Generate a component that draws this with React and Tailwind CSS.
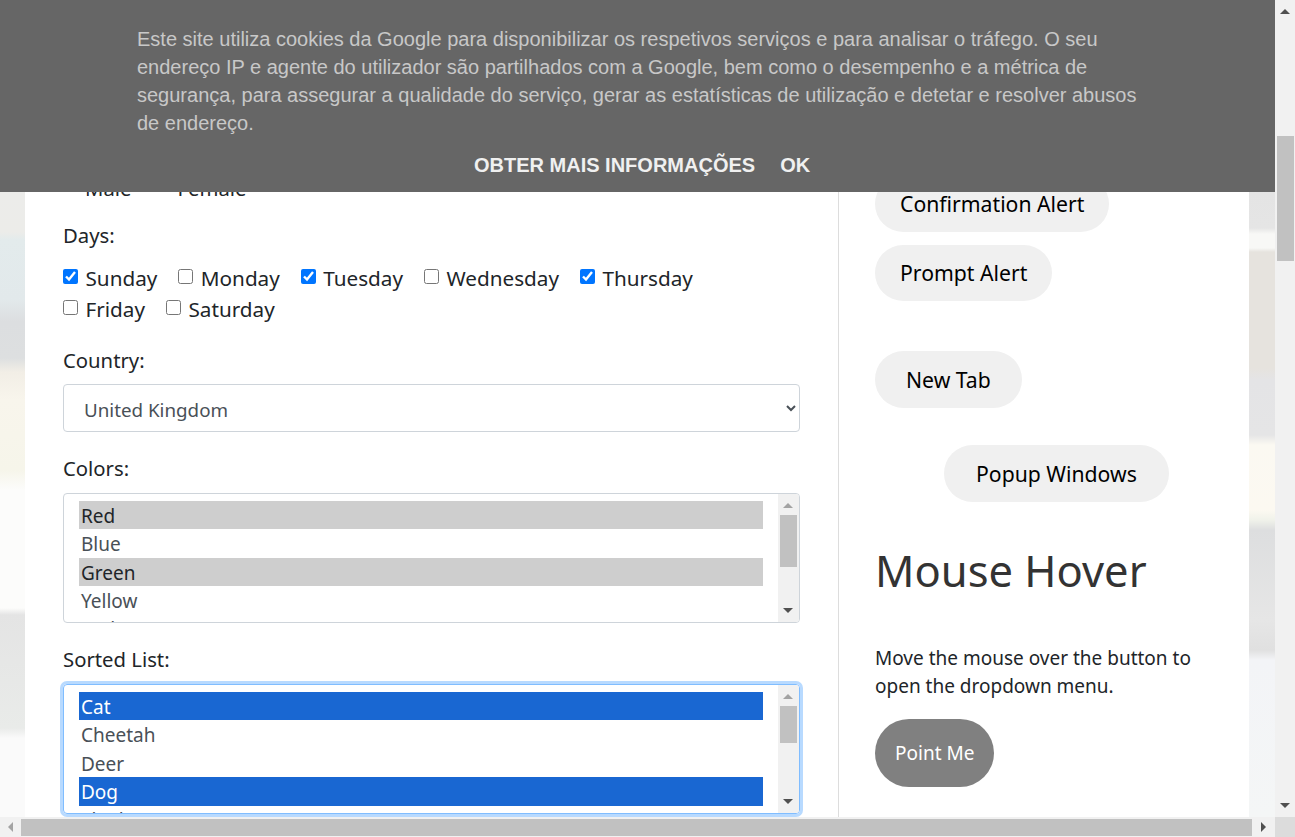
import React from "react";

const colors = ["Red", "Blue", "Green", "Yellow", "Red"];
const colorsOn = ["Red-0", "Green-2"];
const animals = ["Cat", "Cheetah", "Deer", "Dog", "Elephant"];
const animalsOn = ["Cat-0", "Dog-3"];

const days = [
  { name: "Sunday", checked: true },
  { name: "Monday", checked: false },
  { name: "Tuesday", checked: true },
  { name: "Wednesday", checked: false },
  { name: "Thursday", checked: true },
  { name: "Friday", checked: false },
  { name: "Saturday", checked: false },
];

const Arrow = ({ dir, color, className = "" }) => {
  const points = {
    up: "0,5 5,0 10,5",
    down: "0,0 10,0 5,5",
    left: "5,0 5,10 0,5",
    right: "0,0 5,5 0,10",
  };
  const wide = dir === "up" || dir === "down";
  return (
    <svg
      width={wide ? 10 : 5}
      height={wide ? 5 : 10}
      viewBox={wide ? "0 0 10 5" : "0 0 5 10"}
      className={className}
    >
      <polygon points={points[dir]} fill={color} />
    </svg>
  );
};

const ListBox = ({ items, on, selectedClass, focused }) => (
  <div
    className={`flex h-[130px] overflow-hidden rounded border ${
      focused
        ? "border-[#80bdff] shadow-[0_0_0_3px_#b8daff]"
        : "border-[#ced4da]"
    }`}
  >
    <div className="flex-1 overflow-hidden pl-[15px] pr-[15px] pt-[7px]">
      {items.map((item, idx) => (
        <div
          key={idx}
          className={`h-[28.4px] px-[2px] text-[19px] leading-[30px] last:-mt-[0.6px] ${
            on.includes(`${item}-${idx}`) ? selectedClass : "text-[#495057]"
          }`}
        >
          {item}
        </div>
      ))}
    </div>
    {/* List scrollbar */}
    <div className="flex w-[21px] flex-col items-center bg-[#f1f1f1] pr-[1px] pt-[9px]">
      <Arrow dir="up" color="#a3a3a3" />
      <div className={`mt-[7px] w-[17px] bg-[#c1c1c1] ${focused ? "h-[37px]" : "h-[52px]"}`} />
      <div className="flex-1" />
      <Arrow dir="down" color="#505050" className="mb-[9px]" />
    </div>
  </div>
);

const Pill = ({ label, className = "" }) => (
  <button className={`block rounded-full bg-[#f0f0f0] text-[21.2px] leading-[24px] text-black ${className}`}>
    {label}
  </button>
);

export default function App() {
  return (
    <div className="relative flex h-[837px] w-[1295px] flex-col overflow-hidden font-['Noto_Sans','Open_Sans',sans-serif] text-[#212529]">
      <div className="flex h-[817px]">
        {/* Page */}
        <div className="flex w-[1275px] overflow-hidden">
          <div className="w-[25px] bg-[linear-gradient(#ececea_192px,#ecece9_232px,#e3ebec_240px,#e2e9eb_300px,#dcdee0_322px,#dddfe0_358px,#f2eee6_372px,#f8f5ec_400px,#f6f5ea_470px,#fcfcfb_490px,#fcfcfb_608px,#e4e4e4_615px,#e9ebe9_728px,#fafafa_738px)]" />
          <div className="flex w-[1224px] bg-white">
            {/* Left column */}
            <div className="w-[814px] border-r border-[#dddddd] px-[38px] pt-[173px] text-[20.3px]">
              <div className="flex h-[30px] items-center leading-[28px]">
                <input type="radio" className="mb-[8px] h-[15px] w-[15px]" />
                <span className="ml-[7px]">Male</span>
                <input type="radio" className="mb-[8px] ml-[24px] h-[15px] w-[15px]" />
                <span className="ml-[7px]">Female</span>
              </div>

              <div className="mt-[18px] h-[30px] leading-[28px]">Days:</div>
              <div className="mt-[12px] flex flex-wrap text-[20.7px]">
                {days.map((day) => (
                  <label key={day.name} className="mr-[21px] flex h-[31px] items-center gap-[7.5px] leading-[31px]">
                    <input type="checkbox" defaultChecked={day.checked} className="mb-[4px] h-[15px] w-[15px]" />
                    {day.name}
                  </label>
                ))}
              </div>

              <div className="mb-[8px] mt-[21px] h-[30px] leading-[28px]">Country:</div>
              <select className="block h-[48px] w-full rounded border border-[#ced4da] bg-white px-4 pt-[3px] text-[18.8px] text-[#495057]">
                <option>United Kingdom</option>
              </select>

              <div className="mb-[9px] mt-[22px] h-[30px] leading-[28px]">Colors:</div>
              <ListBox items={colors} on={colorsOn} selectedClass="bg-[#cecece] text-[#212529]" />

              <div className="mb-[9px] mt-[22px] h-[30px] leading-[28px]">Sorted List:</div>
              <ListBox items={animals} on={animalsOn} selectedClass="bg-[#1967d2] text-white" focused />
            </div>

            {/* Right column */}
            <div className="flex-1 pl-[36px] pt-[176px]">
              <Pill label="Confirmation Alert" className="h-[56px] px-[25px]" />
              <Pill label="Prompt Alert" className="mt-[13px] h-[56px] px-[25px]" />
              <Pill label="New Tab" className="mt-[50px] h-[57px] px-[31px]" />
              <Pill label="Popup Windows" className="ml-[69px] mt-[37px] h-[57px] px-[32px]" />
              <h2 className="mt-[38px] h-[61px] text-[43.5px] leading-[60px] text-[#333333]">Mouse Hover</h2>
              <p className="mt-[43px] w-[340px] text-[19px] leading-[28px]">
                Move the mouse over the button to open the dropdown menu.
              </p>
              <button className="mt-[19px] block h-[68px] rounded-full bg-[#808080] px-[20px] text-[19px] text-white">
                Point Me
              </button>
            </div>
          </div>
          <div className="w-[26px] bg-[linear-gradient(#e4e4e4_192px,#e5e5e5_228px,#f8f8f6_234px,#f8f8f6_248px,#e6e3de_252px,#e6e3de_368px,#e4e4e6_380px,#e5e5e6_435px,#fbf9f2_445px,#fcf9f1_510px,#f0f2ea_520px,#dddedf_530px,#e6e6e6_620px,#e0e0e0_650px,#f3f4f7_660px,#f4f6f6_817px)]" />
        </div>

        {/* Page vertical scrollbar */}
        <div className="flex w-[20px] flex-col items-center bg-[#f1f1f1] pt-[9px]">
          <Arrow dir="up" color="#505050" />
          <div className="mt-[122px] h-[125px] w-[17px] bg-[#c1c1c1]" />
          <div className="flex-1" />
          <Arrow dir="down" color="#505050" className="mb-[9px]" />
        </div>
      </div>

      {/* Page horizontal scrollbar */}
      <div className="flex h-[20px] items-center bg-[#f1f1f1]">
        <Arrow dir="left" color="#a3a3a3" className="ml-[8px]" />
        <div className="ml-[8px] h-[17px] w-[1231px] bg-[#c1c1c1]" />
        <Arrow dir="right" color="#505050" className="ml-[9px]" />
        <div className="flex-1" />
        <div className="h-[20px] w-[20px] bg-[#dcdcdc]" />
      </div>

      {/* Cookie banner */}
      <div className="absolute left-0 top-0 h-[192px] w-[1275px] bg-[#666666] font-['Liberation_Sans',Arial,sans-serif]">
        <p className="ml-[137px] mt-[25px] w-[1001px] text-[20px] leading-[28px] text-[#c8c8c8]">
          Este site utiliza cookies da Google para disponibilizar os respetivos serviços e para analisar o tráfego. O seu endereço IP e agente do utilizador são partilhados com a Google, bem como o desempenho e a métrica de segurança, para assegurar a qualidade do serviço, gerar as estatísticas de utilização e detetar e resolver abusos de endereço.
        </p>
        <div className="ml-[474px] mt-[14px] flex gap-[25px] text-[20px] font-bold leading-[28px] text-[#f0f0f0]">
          <span>OBTER MAIS INFORMAÇÕES</span>
          <span>OK</span>
        </div>
      </div>
    </div>
  );
}
